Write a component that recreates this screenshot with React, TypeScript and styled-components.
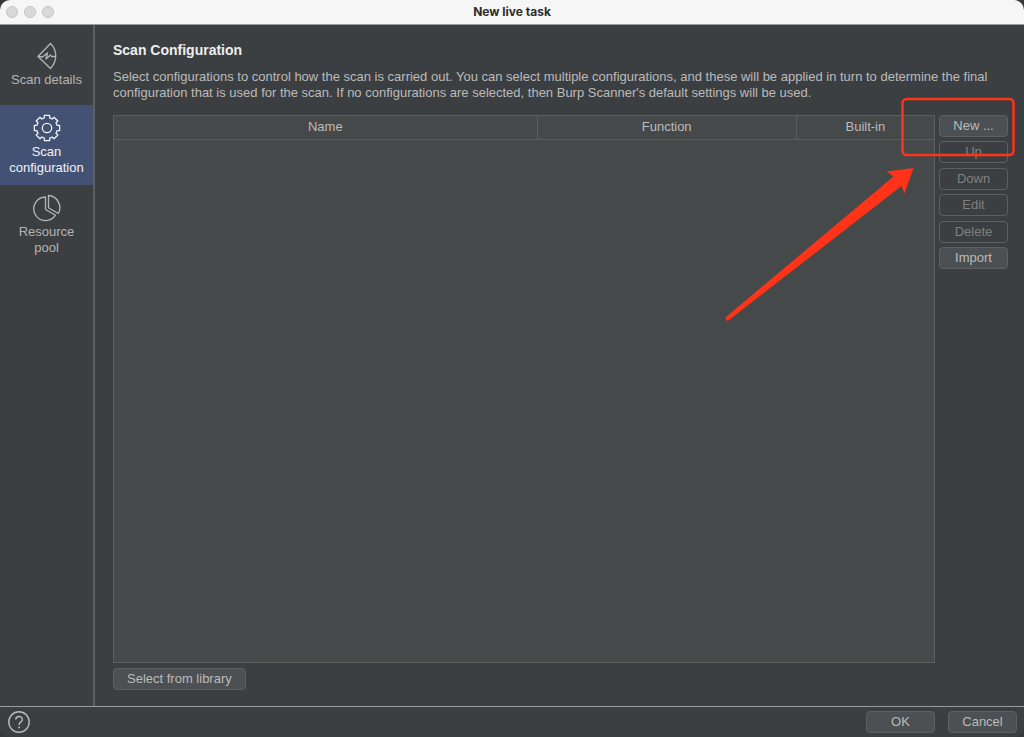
import React from "react";
import styled, { createGlobalStyle } from "styled-components";

const GlobalStyle = createGlobalStyle`
  *, *::before, *::after { box-sizing: border-box; }
  body {
    margin: 0;
    background: #36393b;
    color: #bbbbbb;
    font: 13px/16px "Liberation Sans", Arial, sans-serif;
  }
`;

const Dialog = styled.div`
  position: relative;
  display: flex;
  flex-direction: column;
  min-height: 100vh;
  overflow: hidden;
  background: #3c3f41;
  border-radius: 10px;
`;

const TitleBar = styled.header`
  display: grid;
  grid-template-columns: 1fr auto 1fr;
  align-items: center;
  height: 25px;
  padding: 0 6px;
  background: #f6f6f6;
  border-bottom: 1px solid #9a9f9d;
`;

const Lights = styled.div`
  display: flex;
  gap: 6px;
`;

const Light = styled.button`
  width: 12px;
  height: 12px;
  padding: 0;
  border: 1px solid #c3c3c3;
  border-radius: 50%;
  background: #d9d9d9;
`;

const WindowTitle = styled.h1`
  margin: 0;
  color: #2c2c2c;
  font: 700 12px/16px Inter, sans-serif;
`;

const Body = styled.div`
  display: flex;
  flex: 1;
`;

const Sidebar = styled.nav`
  flex: none;
  width: 95px;
  border-right: 2px solid #5e6060;
`;

const NavItem = styled.button<{ $active?: boolean }>`
  display: flex;
  flex-direction: column;
  align-items: center;
  justify-content: center;
  gap: 2px;
  width: 100%;
  height: 80px;
  padding: 0 8px;
  border: 0;
  background: ${(p) => (p.$active ? "#435274" : "transparent")};
  color: ${(p) => (p.$active ? "#f0f1f3" : "#b4b4b4")};
  font: inherit;

  svg {
    flex: none;
    display: block;
  }
`;

const Main = styled.main`
  display: flex;
  flex: 1;
  flex-direction: column;
  min-width: 0;
  padding: 15px 16px 16px 18px;
`;

const Heading = styled.h2`
  margin: 0 0 9px;
  color: #eeeeee;
  font-size: 14px;
  line-height: 20px;
`;

const Description = styled.p`
  margin: 0 0 14px;
`;

const Workspace = styled.div`
  display: flex;
  flex: 1;
  align-items: stretch;
  gap: 4px;
  margin-bottom: 5px;
`;

const TablePanel = styled.div`
  flex: 1;
  border: 1px solid #5b5e5f;
  background: #45494a;
`;

const Table = styled.table`
  width: 100%;
  table-layout: fixed;
  border-collapse: collapse;
`;

const ColumnHeader = styled.th<{ $width: string }>`
  width: ${(p) => p.$width};
  height: 23px;
  padding: 0;
  border-bottom: 1px solid #5b5e5f;
  font-weight: 400;

  & + & {
    border-left: 1px solid #5b5e5f;
  }
`;

const Actions = styled.div`
  display: flex;
  flex: none;
  flex-direction: column;
  justify-content: space-between;
  width: 69px;
  height: 154px;
`;

const Button = styled.button`
  min-width: 69px;
  height: 22px;
  padding: 0 13px;
  border: 1px solid #5e6060;
  border-radius: 4px;
  background: #4c5052;
  color: #bbbbbb;
  font: inherit;
  white-space: nowrap;

  &:disabled {
    background: transparent;
    color: #808080;
  }
`;

const LibraryButton = styled(Button)`
  align-self: flex-start;
`;

const Footer = styled.footer`
  display: flex;
  align-items: center;
  gap: 13px;
  height: 31px;
  padding: 0 7px 0 8px;
  border-top: 1px solid #999c9b;
`;

const HelpButton = styled.button`
  width: 22px;
  height: 22px;
  margin-right: auto;
  padding: 0;
  border: 0;
  background: transparent;
  color: #bbbbbb;

  svg {
    display: block;
  }
`;

const Callout = styled.svg`
  position: absolute;
  top: 96px;
  right: 8px;
  pointer-events: none;
`;

const ScanIcon = () => (
  <svg width="28" height="28" viewBox="0 0 28 28" fill="none" stroke="currentColor" strokeWidth="1.3" strokeLinejoin="round" strokeLinecap="round">
    <path d="M5 14.5 17.5 1.5C24.5 8.500 24.5 19 17.5 26.5Z" />
    <path d="M5.5 14.5 9.500 15 14.500 11 13 17 17.500 13 18.5 14.500H22" />
  </svg>
);

const gearPath = (() => {
  const points: string[] = [];
  for (let i = 0; i < 8; i++) {
    const spots: [number, number][] = [
      [-15, 10.4], [-12, 12.9], [12, 12.9], [15, 10.4],
    ];
    spots.forEach(([offset, radius]) => {
      const angle = ((i * 45 + offset - 90) * Math.PI) / 180;
      points.push(`${(14 + radius * Math.cos(angle)).toFixed(2)} ${(14 + radius * Math.sin(angle)).toFixed(2)}`);
    });
  }
  return `M${points.join("L")}Z`;
})();

const GearIcon = () => (
  <svg width="28" height="28" viewBox="0 0 28 28" fill="none" stroke="currentColor" strokeWidth="1.3" strokeLinejoin="round">
    <path d={gearPath} />
    <circle cx="14" cy="14" r="4.7" />
  </svg>
);

const PieIcon = () => (
  <svg width="28" height="28" viewBox="0 0 28 28" fill="none" stroke="currentColor" strokeWidth="1.3" strokeLinejoin="round">
    <path d="M12.5 3A11.8 11.8 0 1 0 22.500 21.2L12.5 15.5Z" />
    <path d="M15.5 1.5A12.2 12.2 0 0 1 25.300 19.5L15.5 13.800Z" />
  </svg>
);

const HelpIcon = () => (
  <svg width="22" height="22" viewBox="0 0 22 22" fill="none" stroke="currentColor" strokeWidth="1.4">
    <circle cx="11" cy="11" r="10.2" />
    <path d="M7.8 8.5C7.8 4.6 14.4 4.6 14.4 8.4 14.4 11 11.1 10.8 11.1 14" />
    <path d="M11.1 15.6V17.2" strokeWidth="1.6" />
  </svg>
);

const columns = [
  { label: "Name", width: "51.6%" },
  { label: "Function", width: "31.6%" },
  { label: "Built-in", width: "16.8%" },
];

const actions = [
  { label: "New ...", enabled: true },
  { label: "Up", enabled: false },
  { label: "Down", enabled: false },
  { label: "Edit", enabled: false },
  { label: "Delete", enabled: false },
  { label: "Import", enabled: true },
];

export default function App() {
  return (
    <>
      <GlobalStyle />
      <Dialog>
        <TitleBar>
          <Lights>
            <Light aria-label="Close" />
            <Light aria-label="Minimize" />
            <Light aria-label="Zoom" />
          </Lights>
          <WindowTitle>New live task</WindowTitle>
        </TitleBar>
        <Body>
          <Sidebar>
            <NavItem>
              <ScanIcon />
              Scan details
            </NavItem>
            <NavItem $active aria-current="page">
              <GearIcon />
              Scan configuration
            </NavItem>
            <NavItem>
              <PieIcon />
              Resource pool
            </NavItem>
          </Sidebar>
          <Main>
            <Heading>Scan Configuration</Heading>
            <Description>
              Select configurations to control how the scan is carried out. You can select multiple configurations, and
              these will be applied in turn to determine the final configuration that is used for the scan. If no
              configurations are selected, then Burp Scanner's default settings will be used.
            </Description>
            <Workspace>
              <TablePanel>
                <Table>
                  <thead>
                    <tr>
                      {columns.map((c) => (
                        <ColumnHeader key={c.label} scope="col" $width={c.width}>
                          {c.label}
                        </ColumnHeader>
                      ))}
                    </tr>
                  </thead>
                  <tbody />
                </Table>
              </TablePanel>
              <Actions>
                {actions.map((a) => (
                  <Button key={a.label} disabled={!a.enabled}>
                    {a.label}
                  </Button>
                ))}
              </Actions>
            </Workspace>
            <LibraryButton>Select from library</LibraryButton>
          </Main>
        </Body>
        <Footer>
          <HelpButton aria-label="Help">
            <HelpIcon />
          </HelpButton>
          <Button>OK</Button>
          <Button>Cancel</Button>
        </Footer>
        <Callout width="292" height="228" viewBox="0 0 292 228" fill="none" aria-hidden="true">
          <rect x="178.5" y="3" width="111" height="56" rx="4" stroke="#ff3317" strokeWidth="2.5" />
          <path
            d="M2.5 220.5 169.500 80.5 162.5 75.5 189.5 72 180.5 97.5 177.5 90 5 224Q3 225.5 1.800 224 1 222 2.5 220.5Z"
            fill="#ff3317"
          />
        </Callout>
      </Dialog>
    </>
  );
}
